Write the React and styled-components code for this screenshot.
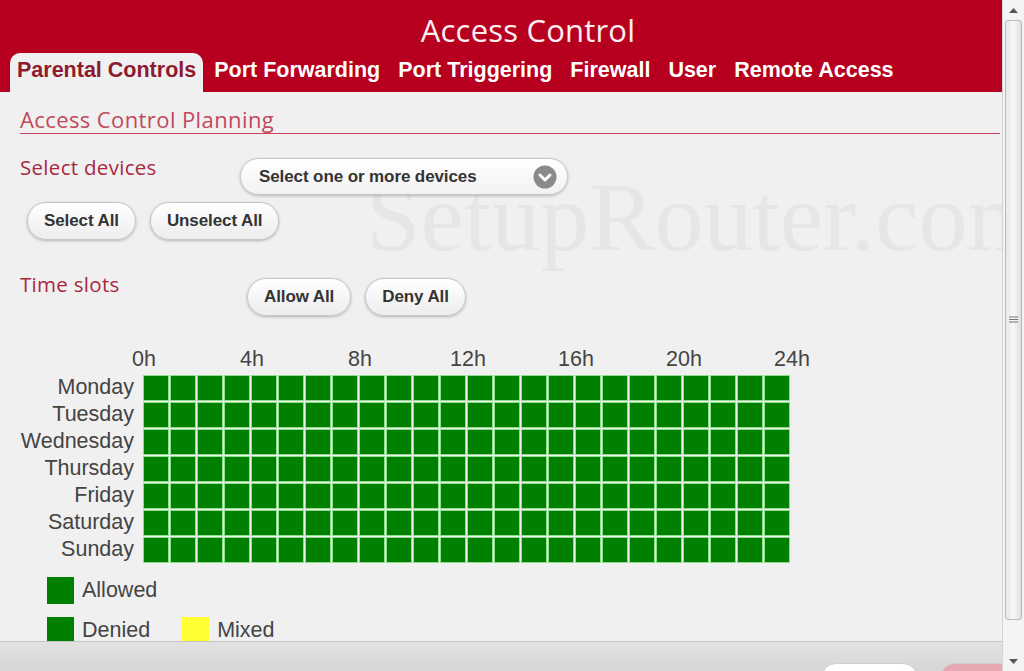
import React from "react";
import styled, { createGlobalStyle } from "styled-components";

const GlobalStyle = createGlobalStyle`
  html, body {
    margin: 0;
    padding: 0;
    background: #f0f0f0;
    overflow: hidden;
  }
`;

const Window = styled.div`
  display: flex;
  width: 1024px;
  height: 671px;
  overflow: hidden;
  background: #f0f0f0;
`;

const Main = styled.div`
  display: flex;
  flex-direction: column;
  width: 1002px;
  height: 671px;
`;

const Header = styled.div`
  background: #b7001f;
  height: 92px;
  display: flex;
  flex-direction: column;
  flex-shrink: 0;
`;

const Title = styled.h1`
  margin: 12px 0 0 0;
  padding-left: 54px;
  text-align: center;
  font-family: "Open Sans", "DejaVu Sans", sans-serif;
  font-weight: 400;
  font-size: 31px;
  line-height: 36px;
  letter-spacing: 0.2px;
  color: #fbeef0;
`;

const Tabs = styled.div`
  display: flex;
  gap: 4px;
  margin-top: 5px;
  padding-left: 10px;
  height: 39px;
`;

const Tab = styled.div`
  display: flex;
  align-items: center;
  padding: 0 7px 5px 7px;
  border-radius: 10px 10px 0 0;
  font-family: "Liberation Sans", Arial, sans-serif;
  font-weight: 700;
  font-size: 21.5px;
  color: ${(p) => (p.$active ? "#8e1a2e" : "#ffffff")};
  background: ${(p) => (p.$active ? "#f0f0f0" : "transparent")};
`;

const Content = styled.div`
  position: relative;
  flex: 1;
  overflow: hidden;
  padding: 14px 0 0 20px;
`;

const Watermark = styled.div`
  position: absolute;
  left: 366px;
  top: 76px;
  font-family: "Liberation Serif", "Times New Roman", serif;
  font-size: 98px;
  line-height: 1;
  color: #e6e6e6;
  white-space: nowrap;
  pointer-events: none;
`;

const SectionTitle = styled.div`
  position: relative;
  margin-right: 2px;
  border-bottom: 1px solid #c8445c;
  font-family: "Open Sans", sans-serif;
  font-size: 22px;
  letter-spacing: 0.4px;
  line-height: 27px;
  color: #c2485c;
`;

const Row = styled.div`
  position: relative;
  display: flex;
  align-items: flex-start;
  margin-top: ${(p) => p.$top}px;
  padding-left: ${(p) => p.$indent || 0}px;
  gap: 14px;
`;

const Label = styled.div`
  width: ${(p) => p.$width}px;
  margin-right: -14px;
  margin-top: ${(p) => p.$shift || 0}px;
  font-family: "Open Sans", sans-serif;
  font-size: 20.5px;
  letter-spacing: 0.3px;
  line-height: 22px;
  color: #a8283e;
`;

const Dropdown = styled.div`
  display: flex;
  align-items: center;
  justify-content: space-between;
  width: 328px;
  height: 37px;
  box-sizing: border-box;
  padding: 0 10px 0 18px;
  border: 1px solid #c6c6c6;
  border-radius: 19px;
  background: linear-gradient(#ffffff, #f2f2f2);
  box-shadow: 0 1px 3px rgba(0, 0, 0, 0.25);
  font-family: "Liberation Sans", Arial, sans-serif;
  font-weight: 700;
  font-size: 17px;
  letter-spacing: -0.1px;
  color: #333;
`;

const Button = styled.button`
  height: 38px;
  padding: 0 16px;
  border: 1px solid #c6c6c6;
  border-radius: 19px;
  background: linear-gradient(#ffffff, #ededed);
  box-shadow: 0 1px 3px rgba(0, 0, 0, 0.25);
  font-family: "Liberation Sans", Arial, sans-serif;
  font-weight: 700;
  font-size: 17px;
  letter-spacing: -0.1px;
  color: #333;
`;

const Schedule = styled.div`
  position: relative;
  margin-top: 32px;
  display: grid;
  grid-template-columns: 114px auto;
  column-gap: 10px;
  row-gap: 6px;
  justify-content: start;
`;

const Hours = styled.div`
  display: flex;
  margin-left: -54px;
`;

const Hour = styled.div`
  width: 108px;
  text-align: center;
  font-family: "Liberation Sans", Arial, sans-serif;
  font-size: 21.5px;
  line-height: 22px;
  color: #444;
`;

const Days = styled.div`
  display: flex;
  flex-direction: column;
  gap: 3px;
`;

const Day = styled.div`
  height: 24px;
  line-height: 22px;
  text-align: right;
  white-space: nowrap;
  font-family: "Liberation Sans", Arial, sans-serif;
  font-size: 21.5px;
  color: #444;
`;

const Cells = styled.div`
  display: grid;
  grid-template-columns: repeat(24, 24px);
  grid-auto-rows: 24px;
  gap: 3px;
`;

const Cell = styled.div`
  background: #008000;
  box-shadow: 0 0 0 1px #8fdc8c;
`;

const Legend = styled.div`
  margin-top: 15px;
  padding-left: 27px;
  display: flex;
  flex-direction: column;
  gap: 13px;
`;

const LegendRow = styled.div`
  display: flex;
  align-items: center;
`;

const Swatch = styled.span`
  width: 27px;
  height: 27px;
  background: ${(p) => p.$color};
  margin-right: 8px;
  margin-left: ${(p) => p.$gap || 0}px;
`;

const LegendText = styled.span`
  font-family: "Liberation Sans", Arial, sans-serif;
  font-size: 21.5px;
  line-height: 27px;
  color: #444;
`;

const Footer = styled.div`
  height: 30px;
  flex-shrink: 0;
  box-sizing: border-box;
  border-top: 1px solid #c4c4c4;
  background: linear-gradient(#e2e2e2, #d6d6d6);
  display: flex;
  justify-content: flex-end;
  gap: 22px;
  padding-top: 21px;
  overflow: hidden;
  margin-right: -22px;
`;

const FooterButton = styled.div`
  width: ${(p) => p.$width}px;
  height: 30px;
  border-radius: 15px;
  background: ${(p) => p.$color};
  border: 1px solid #cfcfcf;
`;

const Scrollbar = styled.div`
  position: relative;
  width: 22px;
  height: 671px;
  box-sizing: border-box;
  border-left: 1px solid #d4d4d4;
  background: #f4f4f4;
  display: flex;
  flex-direction: column;
  align-items: center;
`;

const Arrow = styled.div`
  height: 20px;
  display: flex;
  align-items: center;
  justify-content: center;
`;

const Thumb = styled.div`
  width: 17px;
  height: 600px;
  box-sizing: border-box;
  border: 1px solid #b8b8b8;
  border-radius: 3px;
  background: linear-gradient(90deg, #e8e8e8, #f8f8f8 50%, #dedede);
  display: flex;
  align-items: center;
  justify-content: center;
`;

const Spacer = styled.div`
  flex: 1;
`;

const days = ["Monday", "Tuesday", "Wednesday", "Thursday", "Friday", "Saturday", "Sunday"];
const hours = ["0h", "4h", "8h", "12h", "16h", "20h", "24h"];
const tabs = ["Parental Controls", "Port Forwarding", "Port Triggering", "Firewall", "User", "Remote Access"];

const Chevron = () => (
  <svg width="24" height="24" viewBox="0 0 24 24">
    <circle cx="12" cy="12" r="11.5" fill="#8a8a8a" />
    <path d="M7 10 L12 15 L17 10" fill="none" stroke="#fff" strokeWidth="3" strokeLinecap="round" strokeLinejoin="round" />
  </svg>
);

const App = () => {
  return (
    <Window>
      <GlobalStyle />
      <Main>
        <Header>
          <Title>Access Control</Title>
          <Tabs>
            {tabs.map((t, i) => (
              <Tab key={t} $active={i === 0}>
                {t}
              </Tab>
            ))}
          </Tabs>
        </Header>
        <Content>
          <Watermark>SetupRouter.com</Watermark>
          <SectionTitle>Access Control Planning</SectionTitle>
          <Row $top={24}>
            <Label $width={220} $shift={-2}>
              Select devices
            </Label>
            <Dropdown>
              <span>Select one or more devices</span>
              <Chevron />
            </Dropdown>
          </Row>
          <Row $top={7} $indent={7}>
            <Button>Select All</Button>
            <Button>Unselect All</Button>
          </Row>
          <Row $top={38}>
            <Label $width={227} $shift={-5}>
              Time slots
            </Label>
            <Button>Allow All</Button>
            <Button>Deny All</Button>
          </Row>
          <Schedule>
            <div />
            <Hours>
              {hours.map((h) => (
                <Hour key={h}>{h}</Hour>
              ))}
            </Hours>
            <Days>
              {days.map((d) => (
                <Day key={d}>{d}</Day>
              ))}
            </Days>
            <Cells>
              {Array.from({ length: 7 * 24 }).map((_, i) => (
                <Cell key={i} />
              ))}
            </Cells>
          </Schedule>
          <Legend>
            <LegendRow>
              <Swatch $color="#007f00" />
              <LegendText>Allowed</LegendText>
            </LegendRow>
            <LegendRow>
              <Swatch $color="#007f00" />
              <LegendText>Denied</LegendText>
              <Swatch $color="#ffff33" $gap={32} />
              <LegendText>Mixed</LegendText>
            </LegendRow>
          </Legend>
        </Content>
        <Footer>
          <FooterButton $width={95} $color="#ffffff" />
          <FooterButton $width={82} $color="#e6a9b1" />
        </Footer>
      </Main>
      <Scrollbar>
        <Arrow>
          <svg width="9" height="5" viewBox="0 0 9 5">
            <path d="M0 5 L4.5 0 L9 5 Z" fill="#555" />
          </svg>
        </Arrow>
        <Thumb>
          <svg width="9" height="8" viewBox="0 0 9 8">
            <path d="M0 1 H9 M0 3.5 H9 M0 6 H9" stroke="#777" strokeWidth="1" />
          </svg>
        </Thumb>
        <Spacer />
        <Arrow>
          <svg width="9" height="5" viewBox="0 0 9 5">
            <path d="M0 0 L4.5 5 L9 0 Z" fill="#555" />
          </svg>
        </Arrow>
      </Scrollbar>
    </Window>
  );
};

export default App;
